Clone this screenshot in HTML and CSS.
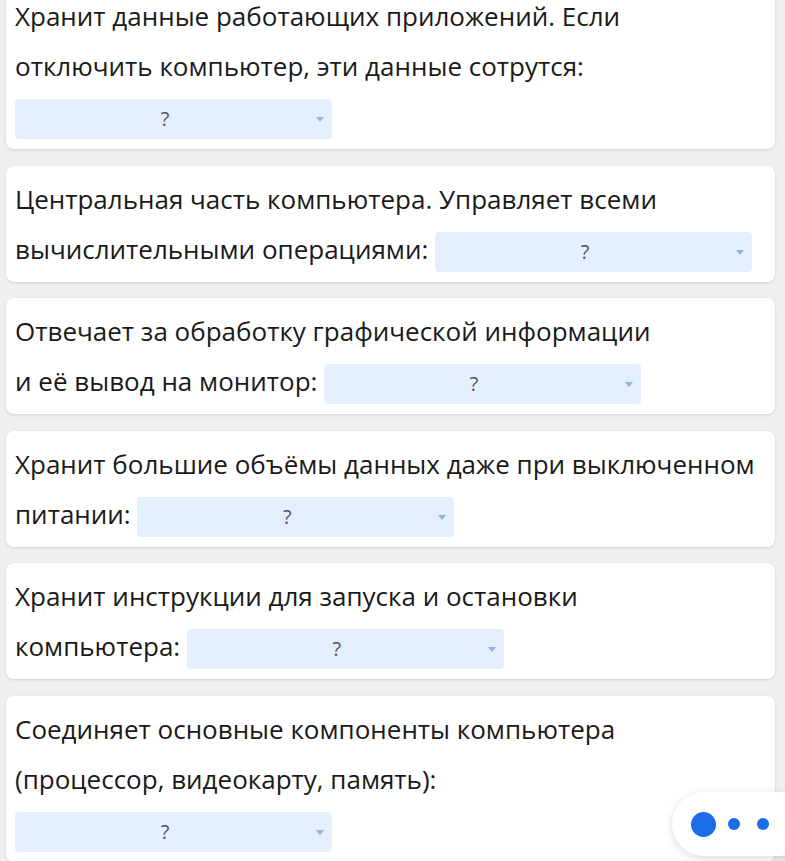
FILE: index.html
```html
<!DOCTYPE html>
<html lang="ru">
<head>
  <meta charset="UTF-8">
  <meta name="viewport" content="width=device-width, initial-scale=1.0">
  <title>Устройство компьютера</title>
  <link rel="stylesheet" href="styles.css">
</head>
<body>
  <main class="quiz">
    <div class="question">
      Хранит данные работающих приложений. Если<br>
      отключить компьютер, эти данные сотрутся:<br>
      <span class="choice">?</span>
    </div>
    <div class="question">
      Центральная часть компьютера. Управляет всеми<br>
      вычислительными операциями:
      <span class="choice">?</span>
    </div>
    <div class="question">
      Отвечает за обработку графической информации<br>
      и её вывод на монитор:
      <span class="choice">?</span>
    </div>
    <div class="question">
      Хранит большие объёмы данных даже при выключенном<br>
      питании:
      <span class="choice">?</span>
    </div>
    <div class="question">
      Хранит инструкции для запуска и остановки<br>
      компьютера:
      <span class="choice">?</span>
    </div>
    <div class="question">
      Соединяет основные компоненты компьютера<br>
      (процессор, видеокарту, память):<br>
      <span class="choice">?</span>
    </div>
  </main>

  <div class="pager">
    <span class="dot dot-active"></span>
    <span class="dot"></span>
    <span class="dot"></span>
  </div>
</body>
</html>
```

FILE: styles.css
```css
body {
  margin: 0;
  background: #f0efed;
  font-family: "Open Sans", "Noto Sans", sans-serif;
  color: #1a1a1a;
  overflow: hidden;
}
.quiz {
  margin-top: -17px;
  padding: 0 10px 0 6px;
}
.question {
  background: #fff;
  border-radius: 8px;
  box-shadow: 0 1px 3px rgba(0,0,0,0.12);
  padding: 8px 9px;
  margin-bottom: 16.5px;
  font-size: 26px;
  line-height: 50px;
}
.choice {
  position: relative;
  display: inline-block;
  vertical-align: middle;
  width: 317px;
  height: 40px;
  background: #e3effd;
  border-radius: 4px;
  padding-right: 17px;
  box-sizing: border-box;
  text-align: center;
  font-size: 20px;
  line-height: 40px;
  color: #555;
}
.choice::after {
  content: "";
  position: absolute;
  right: 8px;
  top: 18px;
  border-left: 4px solid transparent;
  border-right: 4px solid transparent;
  border-top: 5px solid #8fb3e3;
}
/* floating page indicator */
.pager {
  position: fixed;
  left: 672px;
  top: 792px;
  width: 140px;
  height: 64px;
  background: #fff;
  border-radius: 32px;
  box-shadow: 0 2px 8px rgba(0,0,0,0.15);
  display: flex;
  align-items: center;
  gap: 17px;
  padding-left: 19px;
  box-sizing: border-box;
}
.dot {
  width: 12px;
  height: 12px;
  border-radius: 50%;
  background: #1a6ce8;
}
.dot-active {
  width: 25px;
  height: 25px;
  margin-right: -5px;
}
```
